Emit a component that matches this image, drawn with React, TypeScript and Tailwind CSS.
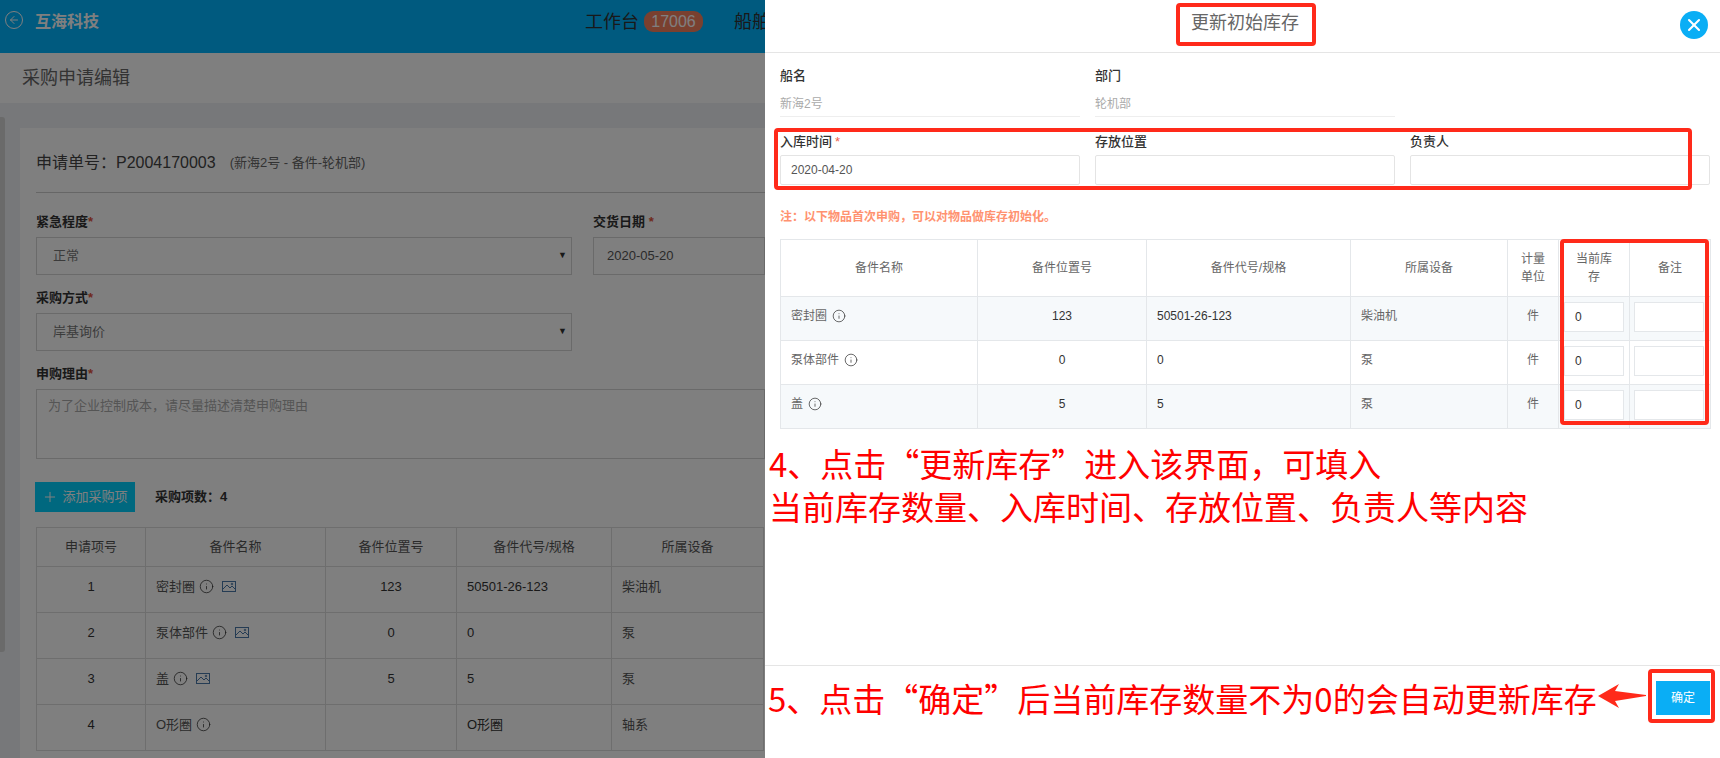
import { ArrowLeft, Info, Plus, X } from "lucide-react";

const FONT = "font-['Liberation_Sans','Noto_Sans_CJK_SC',sans-serif]";
const MARK_FONT = "font-['Noto_Sans_CJK_SC',sans-serif]";

const purchaseRows = [
  { no: 1, name: "密封圈", pic: true, pos: "123", code: "50501-26-123", device: "柴油机" },
  { no: 2, name: "泵体部件", pic: true, pos: "0", code: "0", device: "泵" },
  { no: 3, name: "盖", pic: true, pos: "5", code: "5", device: "泵" },
  { no: 4, name: "O形圈", pic: false, pos: "", code: "O形圈", device: "轴系" },
];

const stockRows = [
  { name: "密封圈", pos: "123", code: "50501-26-123", device: "柴油机" },
  { name: "泵体部件", pos: "0", code: "0", device: "泵" },
  { name: "盖", pos: "5", code: "5", device: "泵" },
];

function Required() {
  return <span className="text-[#e0523a]">*</span>;
}

function PictureIcon() {
  return (
    <svg width="14" height="11" viewBox="0 0 14 11" fill="none" stroke="#4a78a8" strokeWidth="1" className="ml-[4px] shrink-0">
      <rect x="0.5" y="0.5" width="13" height="10" />
      <path d="M1 8 L5 4 L8 7 L10 5 L13 8" />
      <circle cx="10" cy="3" r="0.8" />
    </svg>
  );
}

function FieldLabel({ children }: { children: React.ReactNode }) {
  return <div className="h-[15px] text-[13px] leading-[15px] font-bold text-[#333]">{children}</div>;
}

function SelectBox({ value }: { value: string }) {
  return (
    <div className="mt-[8px] flex h-[38px] w-[536px] items-center justify-between border border-[#d5d5d5] pr-[4px] pl-[16px] text-[13px] text-[#777]">
      {value}
      <span className="text-[9px] text-[#333]">▼</span>
    </div>
  );
}

function BackgroundPage() {
  return (
    <div className="flex h-full w-[765px] flex-col overflow-hidden bg-[#eef0f4]">
      <header className="flex h-[53px] shrink-0 items-start bg-[#00b4ff] pt-[11px] pl-[5px] whitespace-nowrap">
        <span className="flex h-[18px] w-[18px] shrink-0 items-center justify-center rounded-full border border-white">
          <ArrowLeft size={12} color="#fff" />
        </span>
        <span className="ml-[12px] shrink-0 text-[16px] leading-[22px] font-bold text-white">互海科技</span>
        <span className="ml-[486px] shrink-0 text-[18px] leading-[22px] text-[#333]">工作台</span>
        <span className="ml-[5px] h-[21px] w-[59px] shrink-0 rounded-[9px] bg-[#f5805e] text-center text-[16px] leading-[21px] text-white">
          17006
        </span>
        <span className="ml-[31px] shrink-0 text-[18px] leading-[22px] text-[#333]">船舶</span>
      </header>
      <div className="flex h-[50px] shrink-0">
        <div className="w-[10px] bg-white" />
        <div className="flex-1 bg-white pt-[13px] pl-[12px] text-[18px] leading-[25px] text-[#666]">采购申请编辑</div>
      </div>
      <div className="min-h-0 flex-1 pt-[25px] pl-[20px]">
        <div className="h-full bg-white pl-[16px]">
          <div className="flex h-[65px] items-center border-b border-[#ccc] pt-[5px]">
            <span className="text-[16px] text-[#444]">申请单号：P2004170003</span>
            <span className="ml-[14px] text-[13px] text-[#666]">(新海2号 - 备件-轮机部)</span>
          </div>
          <div className="mt-[21px] flex">
            <div>
              <FieldLabel>紧急程度<Required /></FieldLabel>
              <SelectBox value="正常" />
            </div>
            <div className="ml-[21px] min-w-0 flex-1">
              <FieldLabel>交货日期 <Required /></FieldLabel>
              <div className="mt-[8px] flex h-[38px] items-center border border-[#d5d5d5] pl-[13px] text-[13px] text-[#555]">
                2020-05-20
              </div>
            </div>
          </div>
          <div className="mt-[15px]">
            <FieldLabel>采购方式<Required /></FieldLabel>
            <SelectBox value="岸基询价" />
          </div>
          <div className="mt-[15px]">
            <FieldLabel>申购理由<Required /></FieldLabel>
            <div className="mt-[8px] h-[70px] border border-[#d5d5d5] py-[6px] pl-[11px] text-[13px] text-[#aaa]">
              为了企业控制成本，请尽量描述清楚申购理由
            </div>
          </div>
          <div className="mt-[23px] -ml-[1px] flex items-center">
            <button className="flex h-[30px] w-[100px] items-center justify-center gap-[4px] bg-[#00d0ff] text-[13px] text-white">
              <Plus size={16} strokeWidth={1.5} />
              添加采购项
            </button>
            <span className="ml-[20px] text-[13px] font-bold text-[#333]">采购项数：4</span>
          </div>
          <table className="mt-[15px] w-[727px] table-fixed border-collapse text-[13px] text-[#555]">
            <colgroup>
              <col className="w-[109px]" />
              <col className="w-[180px]" />
              <col className="w-[131px]" />
              <col className="w-[155px]" />
              <col className="w-[152px]" />
            </colgroup>
            <thead>
              <tr className="h-[39px]">
                {["申请项号", "备件名称", "备件位置号", "备件代号/规格", "所属设备"].map((h) => (
                  <th key={h} className="border border-[#ddd] font-normal">{h}</th>
                ))}
              </tr>
            </thead>
            <tbody>
              {purchaseRows.map((r) => (
                <tr key={r.no} className="h-[46px]">
                  <td className="border border-[#ddd] pb-[6px] text-center text-[#333]">{r.no}</td>
                  <td className="border border-[#ddd] pb-[6px] pl-[10px]">
                    <span className="flex items-center gap-[4px]">
                      {r.name}
                      <Info size={15} strokeWidth={1.25} className="shrink-0 text-[#333]" />
                      {r.pic && <PictureIcon />}
                    </span>
                  </td>
                  <td className="border border-[#ddd] pb-[6px] text-center text-[#333]">{r.pos}</td>
                  <td className="border border-[#ddd] pb-[6px] pl-[10px] text-[#333]">{r.code}</td>
                  <td className="border border-[#ddd] pb-[6px] pl-[10px]">{r.device}</td>
                </tr>
              ))}
            </tbody>
          </table>
        </div>
      </div>
    </div>
  );
}

function ModalField({ label, required, value }: { label: string; required?: boolean; value?: string }) {
  return (
    <div className="w-[300px] shrink-0">
      <div className="h-[17px] text-[13px] leading-[17px] font-medium text-[#333]">
        {label}
        {required && <span className="ml-[3px] text-[#f0604a]">*</span>}
      </div>
      <div className="mt-[5px] flex h-[30px] items-center rounded-[2px] border border-[#e4e4e4] pl-[10px] text-[12px] text-[#555]">
        {value}
      </div>
    </div>
  );
}

function ReadOnlyField({ label, value }: { label: string; value: string }) {
  return (
    <div className="h-[50px] w-[300px] shrink-0 border-b border-[#eee]">
      <div className="text-[13px] leading-[18px] font-medium text-[#333]">{label}</div>
      <div className="mt-[10px] text-[12px] leading-[18px] text-[#aaa]">{value}</div>
    </div>
  );
}

function Modal() {
  return (
    <div className="absolute top-0 right-0 flex h-full w-[955px] flex-col bg-white">
      <div className="relative flex h-[53px] shrink-0 items-start justify-center border-b border-[#e5e5e5] pt-[10px] pl-[5px] text-[18px] leading-[26px] text-[#666]">
        更新初始库存
        <button className="absolute top-[11px] right-[12px] flex h-[28px] w-[28px] items-center justify-center rounded-full bg-[#0aaef5] text-white">
          <X size={20} strokeWidth={2.5} />
        </button>
      </div>
      <div className="flex-1 pt-[14px] pr-[10px] pl-[15px]">
        <div className="flex gap-[15px]">
          <ReadOnlyField label="船名" value="新海2号" />
          <ReadOnlyField label="部门" value="轮机部" />
        </div>
        <div className="mt-[16px] flex gap-[15px]">
          <ModalField label="入库时间" required value="2020-04-20" />
          <ModalField label="存放位置" />
          <ModalField label="负责人" />
        </div>
        <div className="mt-[23px] text-[12px] leading-[18px] font-bold text-[#ff9270]">
          注：以下物品首次申购，可以对物品做库存初始化。
        </div>
        <table className="mt-[13px] w-[930px] table-fixed border-collapse text-[12px] text-[#666]">
          <colgroup>
            <col className="w-[197px]" />
            <col className="w-[169px]" />
            <col className="w-[204px]" />
            <col className="w-[157px]" />
            <col className="w-[51px]" />
            <col className="w-[71px]" />
            <col className="w-[81px]" />
          </colgroup>
          <thead>
            <tr className="h-[57px]">
              {["备件名称", "备件位置号", "备件代号/规格", "所属设备", "计量单位", "当前库存", "备注"].map((h, i) => (
                <th key={h} className={`border border-[#e4e7ea] font-normal ${i >= 4 ? "px-[12px] leading-[18px]" : ""}`}>
                  {h}
                </th>
              ))}
            </tr>
          </thead>
          <tbody>
            {stockRows.map((r, i) => (
              <tr key={r.name} className={`h-[44px] ${i % 2 === 0 ? "bg-[#f6f9fb]" : ""}`}>
                <td className="border border-[#e4e7ea] pb-[6px] pl-[10px]">
                  <span className="flex items-center gap-[5px]">
                    {r.name}
                    <Info size={14} strokeWidth={1.25} className="shrink-0 text-[#333]" />
                  </span>
                </td>
                <td className="border border-[#e4e7ea] pb-[6px] text-center text-[#333]">{r.pos}</td>
                <td className="border border-[#e4e7ea] pb-[6px] pl-[10px] text-[#333]">{r.code}</td>
                <td className="border border-[#e4e7ea] pb-[6px] pl-[10px]">{r.device}</td>
                <td className="border border-[#e4e7ea] pb-[6px] text-center">件</td>
                <td className="border border-[#e4e7ea] pb-[3px] pl-[5px]">
                  <div className="flex h-[30px] w-[60px] items-center border border-[#e4e7ea] bg-white pl-[10px] text-[#333]">0</div>
                </td>
                <td className="border border-[#e4e7ea] pb-[3px] pl-[4px]">
                  <div className="h-[30px] w-[70px] border border-[#e4e7ea] bg-white" />
                </td>
              </tr>
            ))}
          </tbody>
        </table>
        <div className={`mt-[13px] -ml-[11px] text-[33px] leading-[43px] text-[#ff0000] ${MARK_FONT}`}>
          <p>4、点击“更新库存”进入该界面，可填入</p>
          <p>当前库存数量、入库时间、存放位置、负责人等内容</p>
        </div>
      </div>
      <div className="flex h-[93px] shrink-0 items-start justify-between border-t border-[#e5e5e5] pt-[15px] pr-[10px] pl-[3px]">
        <span className={`text-[33px] leading-[34px] whitespace-nowrap text-[#ff0000] ${MARK_FONT}`}>
          5、点击“确定”后当前库存数量不为0的会自动更新库存
        </span>
        <button className="h-[34px] w-[54px] shrink-0 bg-[#0aaef5] text-[12px] text-white">确定</button>
      </div>

      {/* red markup drawn over the screenshot */}
      <div className="absolute top-[3px] left-[411px] h-[43px] w-[140px] rounded-[4px] border-[4px] border-[#ff2a1a]" />
      <div className="absolute top-[128px] left-[9px] h-[62px] w-[918px] rounded-[4px] border-[4px] border-[#ff2a1a]" />
      <div className="absolute top-[239px] left-[795px] h-[186px] w-[149px] rounded-[4px] border-[4px] border-[#ff2a1a]" />
      <div className="absolute top-[669px] left-[883px] h-[54px] w-[67px] rounded-[4px] border-[4px] border-[#ff2a1a]" />
      <svg className="absolute top-[684px] left-[833px]" width="50" height="24" viewBox="0 0 50 24">
        <path d="M0 12 L21 0 L17 7 L48 11 L48 12 L17 17 L21 24 Z" fill="#ff2a1a" />
      </svg>
    </div>
  );
}

export default function App() {
  return (
    <div className={`relative h-[758px] w-[1720px] overflow-hidden ${FONT}`}>
      <BackgroundPage />
      {/* dim layer + page scrollbar */}
      <div className="absolute top-[117px] left-0 h-[535px] w-[5px] rounded-r-[3px] bg-[#d4d4d4]" />
      <div className="absolute inset-0 bg-black/50" />
      <Modal />
    </div>
  );
}
